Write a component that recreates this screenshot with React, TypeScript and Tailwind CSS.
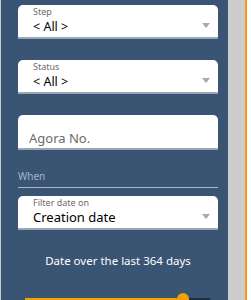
import React from "react";

const font = { fontFamily: '"Noto Sans", "Open Sans", sans-serif' };

function Arrow() {
  return (
    <svg width="8" height="5" viewBox="0 0 8 5" className="absolute right-[8px] bottom-[9px]">
      <path d="M0 0 L8 0 L4 5 Z" fill="#a6aab0" />
    </svg>
  );
}

function Dropdown({ label, value, big }: { label: string; value: string; big?: boolean }) {
  return (
    <div className="relative h-[34px] w-[200px] rounded-t-[5px] bg-white border-b-2 border-[#9aa6b4] pl-[15px]">
      <div className="pt-[1px] text-[9px] leading-[11px] text-[#6b6b6b]">{label}</div>
      <div
        className={
          big
            ? "mt-[2px] text-[13px] leading-[14px] text-black"
            : "mt-[2px] text-[12.5px] leading-[15px] text-black"
        }
      >
        {value}
      </div>
      <Arrow />
    </div>
  );
}

export default function App() {
  return (
    <div className="flex h-[300px] w-[251px] overflow-hidden bg-white" style={font}>
      <div className="w-[1px] bg-[#c8cdd3]" />
      <div className="w-[227px] bg-[#3a5473] pl-[17px] pt-[5px]">
        <Dropdown label="Step" value="< All >" />
        <div className="h-[21px]" />
        <Dropdown label="Status" value="< All >" />
        <div className="h-[21px]" />
        <div className="h-[35px] w-[200px] rounded-t-[5px] bg-white border-b-2 border-[#9aa6b4] pl-[11px] pt-[15px] text-[13px] leading-[17px] text-[#6b6b6b]">
          Agora No.
        </div>
        <div className="mt-[20px] w-[200px] border-b border-[#a9b6c7] pb-[4px] text-[10px] leading-[13px] text-[#a9b6c7]">
          When
        </div>
        <div className="h-[8px]" />
        <Dropdown label="Filter date on" value="Creation date" big />
        <div className="mt-[23px] w-[200px] text-center text-[11.5px] leading-[15px] text-white">
          Date over the last 364 days
        </div>
        <div className="relative mt-[25px] ml-[7px] flex h-[12px] w-[185px] items-center">
          <div className="h-[2px] w-[152px] bg-[#f5a000]" />
          <div className="h-[12px] w-[12px] rounded-full bg-[#f5a000]" />
          <div className="h-[2px] flex-1 bg-[#1e2f44]" />
        </div>
      </div>
      <div className="w-[17px] bg-[#cccccc]" />
      <div className="w-[2px] bg-[#f39a12]" />
      <div className="flex-1 bg-white" />
    </div>
  );
}
